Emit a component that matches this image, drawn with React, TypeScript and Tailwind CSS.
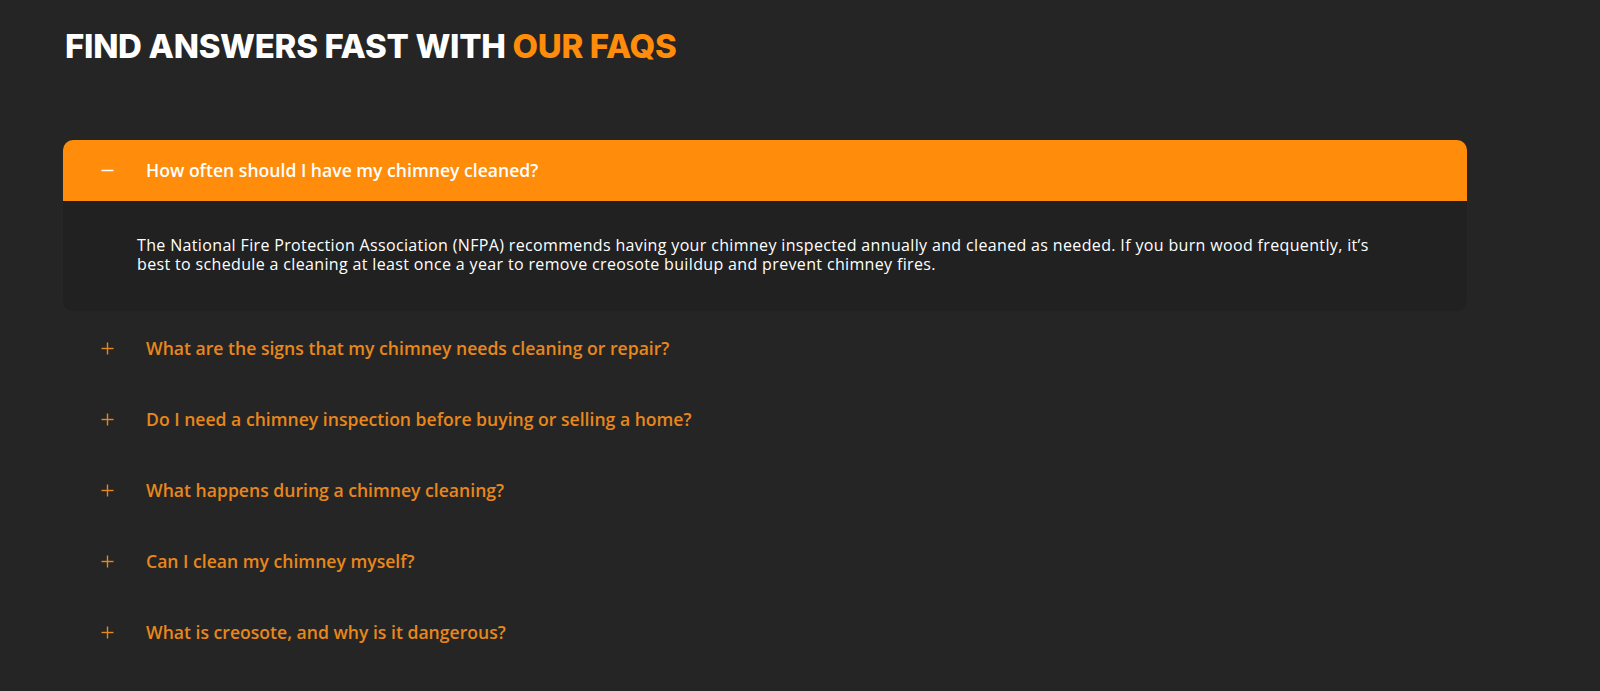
import React, { useState } from "react";

const faqs = [
  {
    q: "How often should I have my chimney cleaned?",
    a: "The National Fire Protection Association (NFPA) recommends having your chimney inspected annually and cleaned as needed. If you burn wood frequently, it\u2019s best to schedule a cleaning at least once a year to remove creosote buildup and prevent chimney fires.",
  },
  { q: "What are the signs that my chimney needs cleaning or repair?", a: "" },
  { q: "Do I need a chimney inspection before buying or selling a home?", a: "" },
  { q: "What happens during a chimney cleaning?", a: "" },
  { q: "Can I clean my chimney myself?", a: "" },
  { q: "What is creosote, and why is it dangerous?", a: "" },
];

function Icon({ open, color }: { open: boolean; color: string }) {
  return (
    <svg width="13" height="13" viewBox="0 0 13 13" className="shrink-0">
      <line x1="0.5" y1="6.5" x2="12.5" y2="6.5" stroke={color} strokeWidth="1.4" />
      {!open && <line x1="6.5" y1="0.5" x2="6.5" y2="12.5" stroke={color} strokeWidth="1.4" />}
    </svg>
  );
}

export default function App() {
  const [open, setOpen] = useState(0);
  return (
    <div
      className="w-[1600px] h-[691px] overflow-hidden bg-[#252525] pl-[63px] pt-[26px]"
      style={{ fontFamily: "'Open Sans', Lato, sans-serif" }}
    >
      <h2
        className="ml-[2px] text-[33px] leading-[40px] font-extrabold uppercase text-white tracking-[-0.3px]"
        style={{ fontFamily: "Inter, 'Open Sans', sans-serif" }}
      >
        Find Answers Fast With <span className="text-[#ff8c0a]">Our FAQs</span>
      </h2>
      <div className="mt-[74px] w-[1404px] flex flex-col">
        {faqs.map((f, i) => {
          const isOpen = open === i;
          if (isOpen) {
            return (
              <div key={i} className="rounded-[10px] bg-[#212121] overflow-hidden mb-[2px]">
                <button
                  onClick={() => setOpen(-1)}
                  className="w-full h-[61px] bg-[#ff8c0a] flex items-center pl-[38px] gap-[32px] text-left"
                >
                  <Icon open color="#ffffff" />
                  <span className="text-[17.6px] font-semibold text-white">{f.q}</span>
                </button>
                <div className="pl-[74px] pt-[35px] pb-[38px] pr-[60px]">
                  <p className="max-w-[1258px] text-[16px] leading-[18.5px] tracking-[0.35px] text-white">{f.a}</p>
                </div>
              </div>
            );
          }
          return (
            <button
              key={i}
              onClick={() => setOpen(i)}
              className="w-full h-[71px] flex items-center pl-[38px] gap-[32px] text-left"
            >
              <Icon open={false} color="#e8871c" />
              <span className="text-[17.6px] font-semibold text-[#e8871c]">{f.q}</span>
            </button>
          );
        })}
      </div>
    </div>
  );
}
